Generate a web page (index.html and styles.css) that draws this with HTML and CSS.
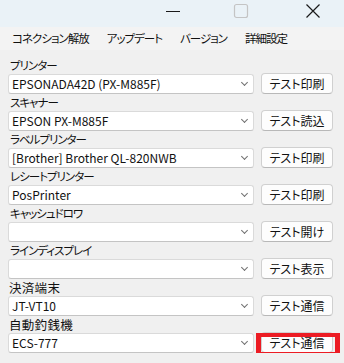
FILE: index.html
```html
<!DOCTYPE html>
<html lang="ja">
<head>
    <meta charset="UTF-8">
    <meta name="viewport" content="width=device-width, initial-scale=1.0">
    <title>デバイス設定</title>
    <link rel="stylesheet" href="styles.css">
</head>
<body>
    <div class="titlebar">
        <span class="ctl ctl-min"><svg width="16" height="16" viewBox="0 0 16 16"><path d="M1 8.5h14" stroke="#1a1a1a" stroke-width="1"/></svg></span>
        <span class="ctl ctl-max"><svg width="16" height="16" viewBox="0 0 16 16"><rect x="1.5" y="1.5" width="13" height="13" rx="2" fill="none" stroke="#c4c4c4" stroke-width="1.2"/></svg></span>
        <span class="ctl ctl-close"><svg width="16" height="16" viewBox="0 0 16 16"><path d="M1.5 1.5l13 13M14.5 1.5l-13 13" stroke="#1a1a1a" stroke-width="1.2"/></svg></span>
    </div>
    <div class="menubar">
        <span class="menu-item">コネクション解放</span>
        <span class="menu-item">アップデート</span>
        <span class="menu-item">バージョン</span>
        <span class="menu-item">詳細設定</span>
    </div>
    <div class="devices">
        <div class="device">
            <label>プリンター</label>
            <div class="combo"><span>EPSONADA42D (PX-M885F)</span></div>
            <button>テスト印刷</button>
        </div>
        <div class="device">
            <label>スキャナー</label>
            <div class="combo"><span>EPSON PX-M885F</span></div>
            <button>テスト読込</button>
        </div>
        <div class="device">
            <label>ラベルプリンター</label>
            <div class="combo"><span>[Brother] Brother QL-820NWB</span></div>
            <button>テスト印刷</button>
        </div>
        <div class="device">
            <label>レシートプリンター</label>
            <div class="combo"><span>PosPrinter</span></div>
            <button>テスト印刷</button>
        </div>
        <div class="device">
            <label>キャッシュドロワ</label>
            <div class="combo"><span></span></div>
            <button>テスト開け</button>
        </div>
        <div class="device">
            <label>ラインディスプレイ</label>
            <div class="combo"><span></span></div>
            <button>テスト表示</button>
        </div>
        <div class="device">
            <label class="kanji">決済端末</label>
            <div class="combo"><span>JT-VT10</span></div>
            <button>テスト通信</button>
        </div>
        <div class="device">
            <label class="kanji">自動釣銭機</label>
            <div class="combo"><span>ECS-777</span></div>
            <button class="marked">テスト通信</button>
        </div>
    </div>
</body>
</html>
```

FILE: styles.css
```css
body {
    margin: 0;
    background-color: #f0f0f0;
    font-family: "Noto Sans CJK JP", "Noto Sans", sans-serif;
    font-size: 12px;
    font-feature-settings: "palt";
    color: #111;
}
.titlebar {
    height: 27px;
    background-color: #eaf2f7;
    position: relative;
}
.ctl {
    position: absolute;
    top: 3px;
    width: 16px;
    height: 16px;
}
.ctl svg {
    display: block;
}
.ctl-min {
    left: 165px;
}
.ctl-max {
    left: 233px;
}
.ctl-close {
    left: 305px;
}
.menubar {
    height: 23px;
    display: flex;
    align-items: center;
    padding-left: 3px;
    background-color: #f3f3f3;
    font-size: 11.5px;
    letter-spacing: -1px;
}
.menu-item {
    padding: 0 9px;
    line-height: 23px;
}
.devices {
    padding: 7px 0 0 8px;
}
.device {
    display: grid;
    grid-template-columns: 246px 72px;
    grid-template-rows: 17px 20px;
    column-gap: 7px;
}
.device label {
    grid-column: 1 / 3;
    line-height: 17px;
    padding-left: 2px;
    font-size: 11.5px;
    letter-spacing: -1px;
}
.device label.kanji {
    padding-left: 1px;
    font-size: 12.5px;
    letter-spacing: 0.3px;
}
.combo {
    box-sizing: border-box;
    height: 20px;
    background-color: #fff;
    border: 1px solid #dadada;
    border-bottom-color: #c4c4c4;
    border-radius: 3px;
    padding-left: 3px;
    line-height: 18px;
    position: relative;
}
.combo::after {
    content: "";
    position: absolute;
    right: 6px;
    top: 5px;
    width: 4px;
    height: 4px;
    border-right: 1px solid #707070;
    border-bottom: 1px solid #707070;
    transform: rotate(45deg);
}
.device button {
    box-sizing: border-box;
    height: 21px;
    margin-top: -1px;
    background-color: #fdfdfd;
    border: 1px solid #d0d0d0;
    border-bottom-color: #b8b8b8;
    border-radius: 4px;
    font: inherit;
    font-feature-settings: "palt";
    padding: 0;
    color: #111;
    position: relative;
}
.device button.marked::after {
    content: "";
    position: absolute;
    left: -6px;
    top: 0;
    right: -8px;
    bottom: -4px;
    border: 5px solid #ec1c24;
    border-top-width: 4px;
    border-bottom-width: 4px;
}
```
